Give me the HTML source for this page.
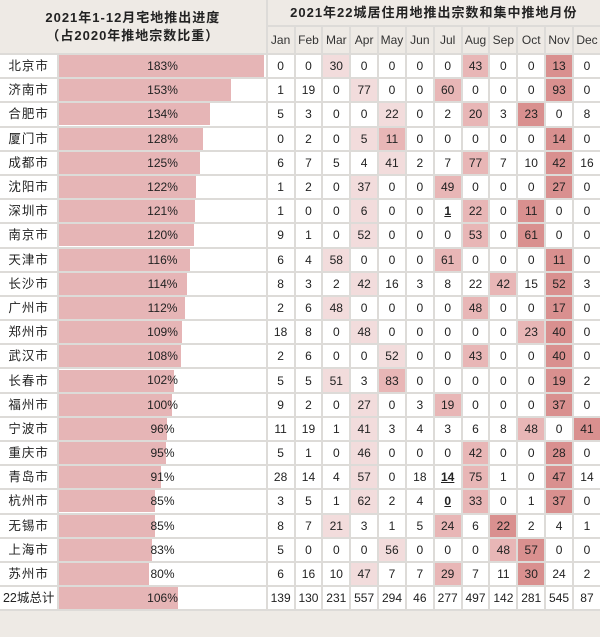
<!DOCTYPE html><html><head><meta charset="utf-8"><style>
body{margin:0;background:#eeeae5;width:600px;height:637px;overflow:hidden;font-family:"Liberation Sans","Noto Sans CJK SC",sans-serif;}
table{position:absolute;left:-2px;top:-2px;border-collapse:separate;border-spacing:2px;table-layout:fixed;width:604px;background:#dddbd8;}
td{padding:0;text-align:center;font-size:12px;color:#222;background:#fff;height:22.2px;line-height:22px;overflow:hidden;white-space:nowrap}
td.h{background:#eeeae5;font-weight:bold;font-size:13px;color:#222;line-height:18px;letter-spacing:1px}
td.m{background:#eeeae5;height:26px;font-size:12px;color:#333}
td.t{height:25px}
td.c{font-size:12.5px;letter-spacing:1px}
td.b{position:relative;text-align:left}
td.b i{display:block;height:22px;background:#e6b5b6}
td.b span{position:absolute;left:0;right:0;top:0;text-align:center}
.a{background:#f2dcdc}.x{background:#e8b6b6}.z{background:#d9908f}
u{text-decoration:underline}
</style></head><body>
<table>
<col style="width:57px"><col style="width:205px"><col span="12" style="width:25.7px">
<tr><td class="h" rowspan="2" colspan="2">2021年1-12月宅地推出进度<br>（占2020年推地宗数比重）</td><td class="h t" colspan="12">2021年22城居住用地推出宗数和集中推地月份</td></tr>
<tr><td class="m">Jan</td><td class="m">Feb</td><td class="m">Mar</td><td class="m">Apr</td><td class="m">May</td><td class="m">Jun</td><td class="m">Jul</td><td class="m">Aug</td><td class="m">Sep</td><td class="m">Oct</td><td class="m">Nov</td><td class="m">Dec</td></tr>
<tr><td class="c">北京市</td><td class="b"><i style="width:205px"></i><span>183%</span></td><td>0</td><td>0</td><td class="a">30</td><td>0</td><td>0</td><td>0</td><td>0</td><td class="x">43</td><td>0</td><td>0</td><td class="z">13</td><td>0</td></tr>
<tr><td class="c">济南市</td><td class="b"><i style="width:172px"></i><span>153%</span></td><td>1</td><td>19</td><td>0</td><td class="a">77</td><td>0</td><td>0</td><td class="x">60</td><td>0</td><td>0</td><td>0</td><td class="z">93</td><td>0</td></tr>
<tr><td class="c">合肥市</td><td class="b"><i style="width:151px"></i><span>134%</span></td><td>5</td><td>3</td><td>0</td><td>0</td><td class="a">22</td><td>0</td><td>2</td><td class="x">20</td><td>3</td><td class="z">23</td><td>0</td><td>8</td></tr>
<tr><td class="c">厦门市</td><td class="b"><i style="width:144px"></i><span>128%</span></td><td>0</td><td>2</td><td>0</td><td class="a">5</td><td class="x">11</td><td>0</td><td>0</td><td>0</td><td>0</td><td>0</td><td class="z">14</td><td>0</td></tr>
<tr><td class="c">成都市</td><td class="b"><i style="width:141px"></i><span>125%</span></td><td>6</td><td>7</td><td>5</td><td>4</td><td class="a">41</td><td>2</td><td>7</td><td class="x">77</td><td>7</td><td>10</td><td class="z">42</td><td>16</td></tr>
<tr><td class="c">沈阳市</td><td class="b"><i style="width:137px"></i><span>122%</span></td><td>1</td><td>2</td><td>0</td><td class="a">37</td><td>0</td><td>0</td><td class="x">49</td><td>0</td><td>0</td><td>0</td><td class="z">27</td><td>0</td></tr>
<tr><td class="c">深圳市</td><td class="b"><i style="width:136px"></i><span>121%</span></td><td>1</td><td>0</td><td>0</td><td class="a">6</td><td>0</td><td>0</td><td><u><b>1</b></u></td><td class="x">22</td><td>0</td><td class="z">11</td><td>0</td><td>0</td></tr>
<tr><td class="c">南京市</td><td class="b"><i style="width:135px"></i><span>120%</span></td><td>9</td><td>1</td><td>0</td><td class="a">52</td><td>0</td><td>0</td><td>0</td><td class="x">53</td><td>0</td><td class="z">61</td><td>0</td><td>0</td></tr>
<tr><td class="c">天津市</td><td class="b"><i style="width:131px"></i><span>116%</span></td><td>6</td><td>4</td><td class="a">58</td><td>0</td><td>0</td><td>0</td><td class="x">61</td><td>0</td><td>0</td><td>0</td><td class="z">11</td><td>0</td></tr>
<tr><td class="c">长沙市</td><td class="b"><i style="width:128px"></i><span>114%</span></td><td>8</td><td>3</td><td>2</td><td class="a">42</td><td>16</td><td>3</td><td>8</td><td>22</td><td class="x">42</td><td>15</td><td class="z">52</td><td>3</td></tr>
<tr><td class="c">广州市</td><td class="b"><i style="width:126px"></i><span>112%</span></td><td>2</td><td>6</td><td class="a">48</td><td>0</td><td>0</td><td>0</td><td>0</td><td class="x">48</td><td>0</td><td>0</td><td class="z">17</td><td>0</td></tr>
<tr><td class="c">郑州市</td><td class="b"><i style="width:123px"></i><span>109%</span></td><td>18</td><td>8</td><td>0</td><td class="a">48</td><td>0</td><td>0</td><td>0</td><td>0</td><td>0</td><td class="x">23</td><td class="z">40</td><td>0</td></tr>
<tr><td class="c">武汉市</td><td class="b"><i style="width:122px"></i><span>108%</span></td><td>2</td><td>6</td><td>0</td><td>0</td><td class="a">52</td><td>0</td><td>0</td><td class="x">43</td><td>0</td><td>0</td><td class="z">40</td><td>0</td></tr>
<tr><td class="c">长春市</td><td class="b"><i style="width:115px"></i><span>102%</span></td><td>5</td><td>5</td><td class="a">51</td><td>3</td><td class="x">83</td><td>0</td><td>0</td><td>0</td><td>0</td><td>0</td><td class="z">19</td><td>2</td></tr>
<tr><td class="c">福州市</td><td class="b"><i style="width:113px"></i><span>100%</span></td><td>9</td><td>2</td><td>0</td><td class="a">27</td><td>0</td><td>3</td><td class="x">19</td><td>0</td><td>0</td><td>0</td><td class="z">37</td><td>0</td></tr>
<tr><td class="c">宁波市</td><td class="b"><i style="width:108px"></i><span>96%</span></td><td>11</td><td>19</td><td>1</td><td class="a">41</td><td>3</td><td>4</td><td>3</td><td>6</td><td>8</td><td class="x">48</td><td>0</td><td class="z">41</td></tr>
<tr><td class="c">重庆市</td><td class="b"><i style="width:107px"></i><span>95%</span></td><td>5</td><td>1</td><td>0</td><td class="a">46</td><td>0</td><td>0</td><td>0</td><td class="x">42</td><td>0</td><td>0</td><td class="z">28</td><td>0</td></tr>
<tr><td class="c">青岛市</td><td class="b"><i style="width:102px"></i><span>91%</span></td><td>28</td><td>14</td><td>4</td><td class="a">57</td><td>0</td><td>18</td><td><u><b>14</b></u></td><td class="x">75</td><td>1</td><td>0</td><td class="z">47</td><td>14</td></tr>
<tr><td class="c">杭州市</td><td class="b"><i style="width:96px"></i><span>85%</span></td><td>3</td><td>5</td><td>1</td><td class="a">62</td><td>2</td><td>4</td><td><u><b>0</b></u></td><td class="x">33</td><td>0</td><td>1</td><td class="z">37</td><td>0</td></tr>
<tr><td class="c">无锡市</td><td class="b"><i style="width:96px"></i><span>85%</span></td><td>8</td><td>7</td><td class="a">21</td><td>3</td><td>1</td><td>5</td><td class="x">24</td><td>6</td><td class="z">22</td><td>2</td><td>4</td><td>1</td></tr>
<tr><td class="c">上海市</td><td class="b"><i style="width:93px"></i><span>83%</span></td><td>5</td><td>0</td><td>0</td><td>0</td><td class="a">56</td><td>0</td><td>0</td><td>0</td><td class="x">48</td><td class="z">57</td><td>0</td><td>0</td></tr>
<tr><td class="c">苏州市</td><td class="b"><i style="width:90px"></i><span>80%</span></td><td>6</td><td>16</td><td>10</td><td class="a">47</td><td>7</td><td>7</td><td class="x">29</td><td>7</td><td>11</td><td class="z">30</td><td>24</td><td>2</td></tr>
<tr><td class="c" style="letter-spacing:0">22城总计</td><td class="b"><i style="width:119px"></i><span>106%</span></td><td>139</td><td>130</td><td>231</td><td>557</td><td>294</td><td>46</td><td>277</td><td>497</td><td>142</td><td>281</td><td>545</td><td>87</td></tr>
</table>
</body></html>
